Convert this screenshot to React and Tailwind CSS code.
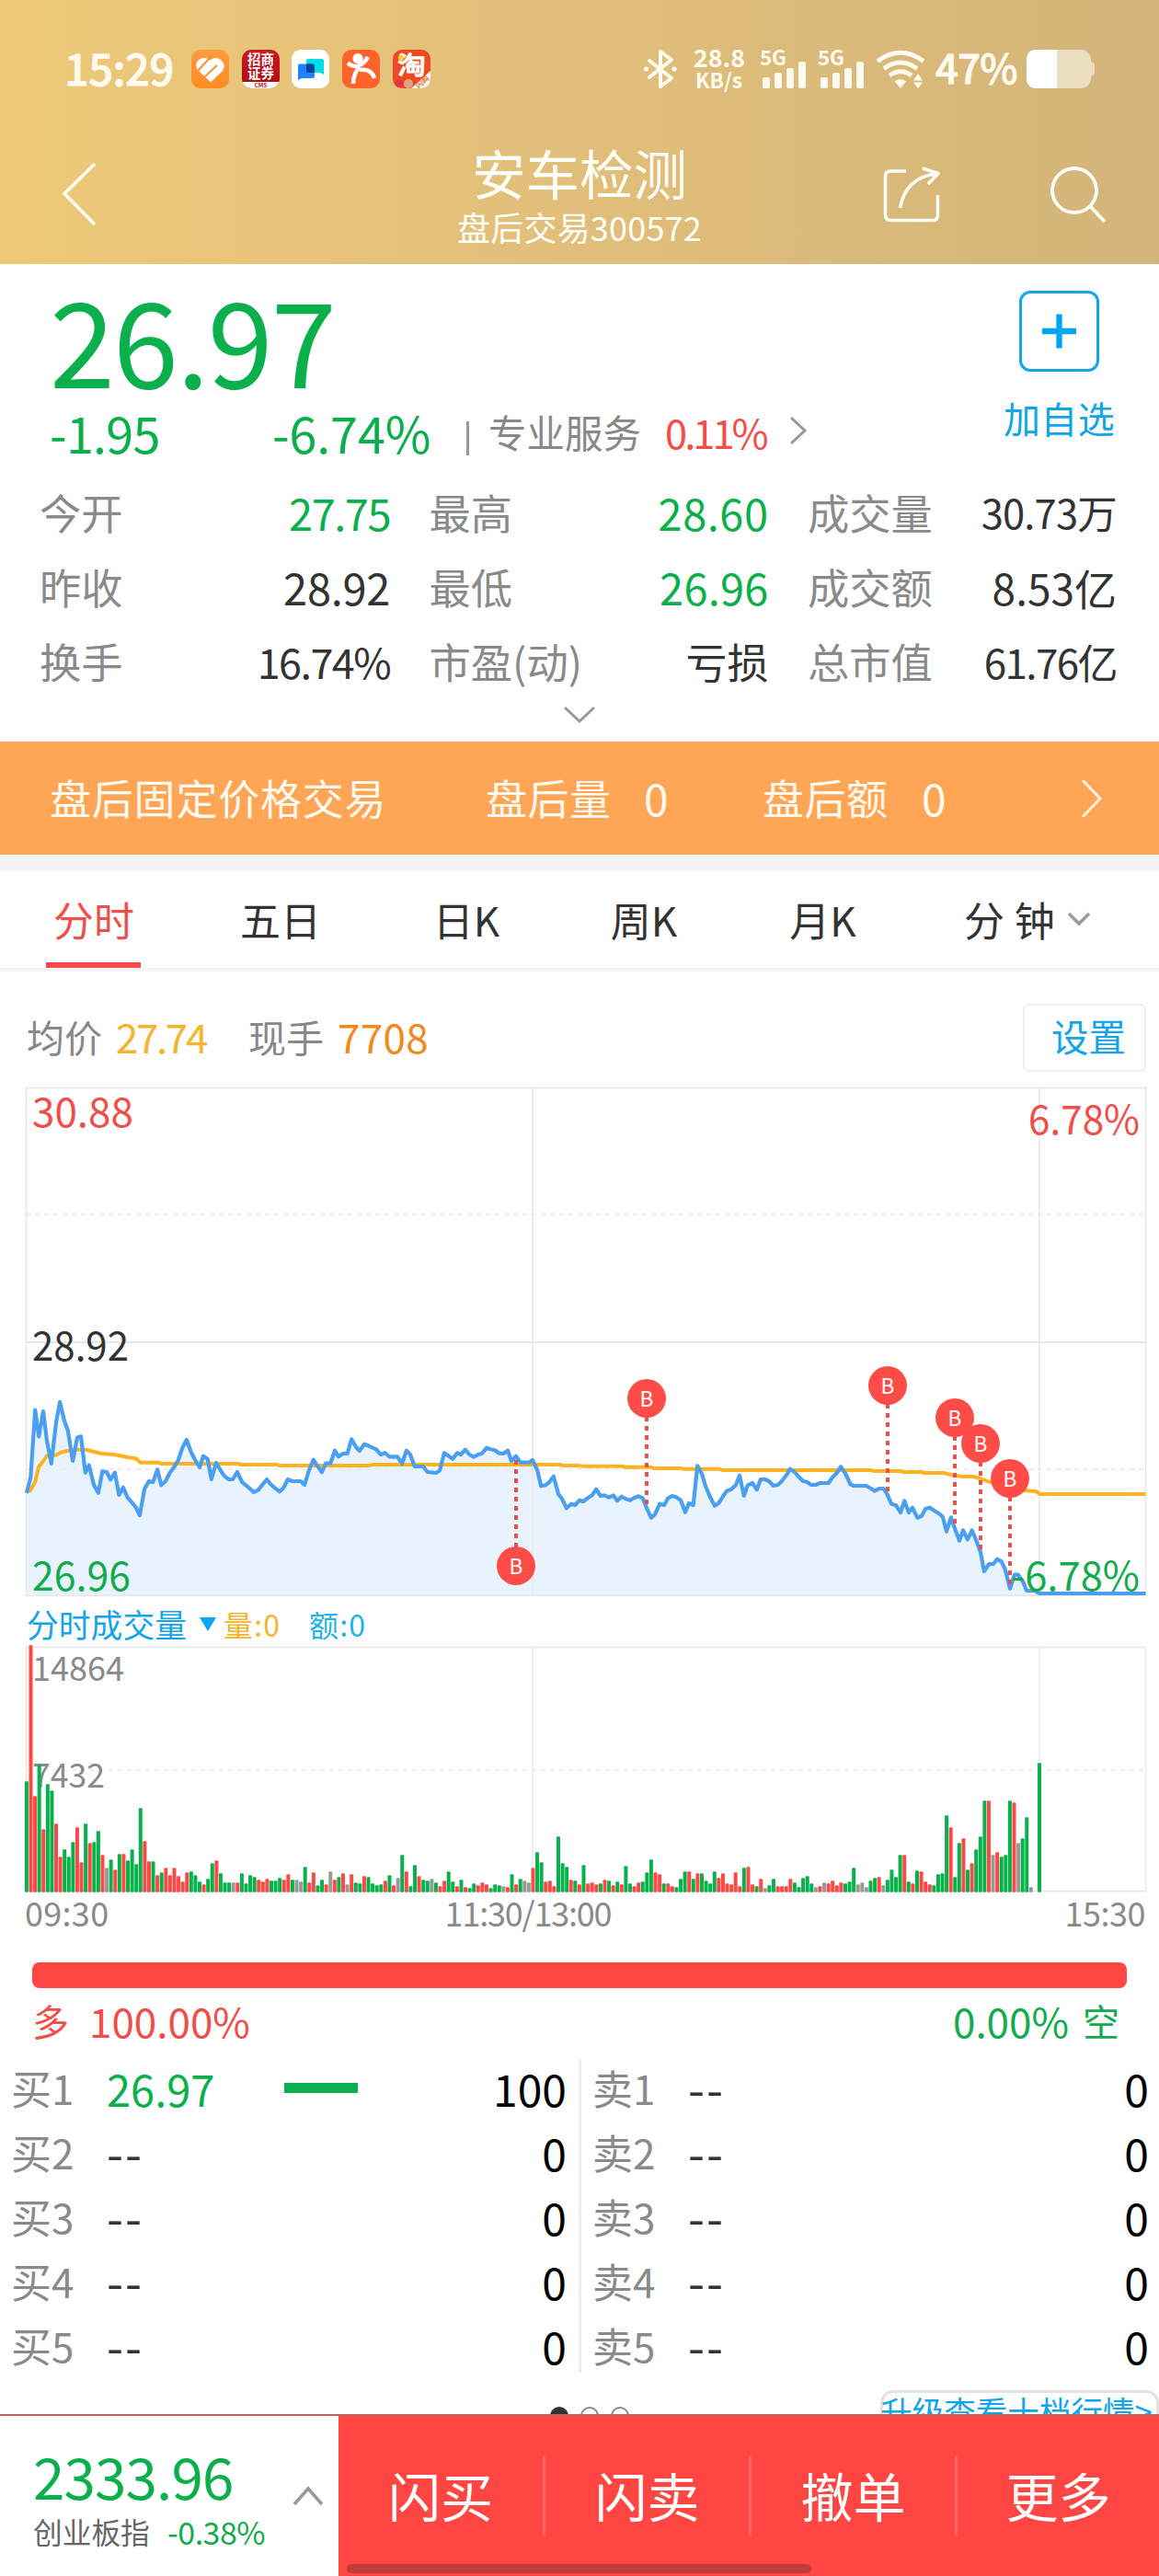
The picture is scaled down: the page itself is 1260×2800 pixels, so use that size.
import React from "react";

const MORNING =
  "72,668 83,618 95,398 105,484 117,402 127,498 139,572 152,436 162,372 174,433 184,466 197,564 209,488 219,484 231,602 241,578 254,642 266,668 277,598 289,600 299,625 311,602 322,675 333,650 345,683 356,698 368,716 378,741 391,655 403,630 414,633 426,592 436,643 448,630 459,604 470,586 482,562 494,520 505,495 518,538 528,560 540,585 550,548 562,558 572,624 585,570 597,595 607,613 619,624 630,624 642,600 655,633 665,643 677,655 687,666 699,658 711,640 722,624 734,642 744,652 757,664 767,652 779,624 791,630 814,630 824,642 836,594 848,560 859,580 871,601 881,572 894,572 906,530 916,550 928,540 940,540 951,493 963,518 973,531 986,509 996,514 1018,526 1030,543 1042,538 1053,550 1075,550 1088,572 1100,530 1110,543 1122,582 1145,582 1157,600 1180,603 1190,595 1202,538 1225,557 1237,538 1247,543 1259,527 1270,543 1282,551 1294,543 1304,540 1317,521 1327,526 1339,529 1351,539 1362,540 1374,530 1384,564 1396,548 1409,569 1431,569 1441,561 1454,594 1464,646 1476,643 1486,634 1498,614 1511,673 1521,688 1533,718 1546,704 1556,708 1568,692";
const AFTERNOON =
  "10,696 22,685 34,676 45,656 57,678 67,676 80,683 92,676 102,694 114,680 124,687 137,692 147,685 160,679 171,685 182,718 194,749 204,738 217,704 229,708 239,686 251,678 261,682 274,692 286,731 296,702 308,708 319,580 331,606 341,646 353,680 366,710 376,702 388,680 398,662 410,657 423,643 433,611 445,677 455,643 468,636 480,658 490,624 502,624 513,630 525,645 537,642 547,630 560,610 570,590 582,600 592,614 605,630 615,632 627,642 640,642 650,636 674,636 684,618 697,602 707,583 720,606 733,640 742,645 776,645 789,654 799,662 811,654 823,654 833,674 844,704 856,708 869,732 879,694 891,732 901,716 914,749 926,743 936,720 948,716 960,726 971,734 983,746 993,794 1005,748 1015,782 1028,824 1038,790 1050,820 1062,790 1073,822 1085,860 1095,924 1108,900 1120,900 1130,884 1142,892 1152,918 1165,980 1177,935 1187,935 1200,958 1210,987 1232,987 1244,996 1532,996";
const AVG_MORNING =
  "72,665 82,661 95,632 105,583 115,568 127,547 150,545 165,536 185,530 210,527 232,527 275,540 310,543 345,552 368,556 380,569 430,569 436,573 645,573 652,576 750,576 756,579 1000,579 1006,576 1515,576 1522,579 1565,579";
const AVG_AFTERNOON =
  "10,581 115,581 122,584 195,584 202,588 275,588 282,590 380,590 386,594 790,594 796,597 870,597 876,600 925,600 932,603 985,603 1010,610 1035,615 1065,615 1085,621 1110,633 1130,636 1164,648 1210,661 1235,663 1246,672 1532,672";

// Series samples are stored on a fine grid; this maps them to chart pixels.
const toPoints = (series, originX) =>
  series
    .split(" ")
    .map((pair) => {
      const [x, y] = pair.split(",").map(Number);
      return `${(originX + x / 2.489).toFixed(1)},${(1400 + y / 3).toFixed(1)}`;
    })
    .join(" ");

const PRICE_POINTS = `${toPoints(MORNING, 0)} ${toPoints(AFTERNOON, 630)}`;
const AVG_POINTS = `${toPoints(AVG_MORNING, 0)} ${toPoints(AVG_AFTERNOON, 630)}`;

// One entry per minute: g = down, r = up, a = flat, then the bar's top.
const VOLUME =
  "g589 r145 r637 g535 r745 g598 g619 r727 r835 g811 g835 g787 r739 r853 g727 r790 g787 g751 r829 a871 g844 r877 g826 r826 g847 g811 g859 g676 r784 r850 g850 r895 g886 r871 r895 r871 r898 r916 r886 g883 g895 g916 r925 g907 g856 r847 g889 g919 g919 a919 r919 g889 g922 g895 g901 r910 r916 r907 g913 g913 g904 r910 r892 g910 a910 a916 g868 r919 r886 g928 g910 r925 a883 r910 g901 r889 a925 r892 g919 g922 r898 g901 g922 g928 g925 r913 g895 r928 a904 g829 r883 g931 g862 r898 g910 g913 a907 g919 r931 r913 g883 g916 r931 g910 r934 g937 g922 r928 r919 r925 g937 g925 g928 a931 r934 g892 r925 g907 a913 a919 r871 g820 g853 r916 r913 r931 g769 g856 g868 r910 g913 r925 g862 r922 r919 r925 g922 r910 g913 r928 g916 r925 g865 g922 r931 r919 g916 g886 g844 r886 r892 g922 r922 r931 g934 g907 g883 r883 g907 r889 g889 g913 g922 g883 r904 r889 r922 r925 r886 r931 g871 r868 r925 g931 r907 a937 g928 g907 r931 r931 r931 r907 g919 g934 g904 g898 g922 a934 r931 a919 r922 r913 r928 r919 g922 g916 g871 a925 a919 a934 g913 g904 r901 a928 g910 g877 g901 g829 r829 g916 r922 g880 r883 r916 r925 g928 g892 g889 g700 r739 g901 g790 r775 g877 r856 g811 g769 g652 r652 a829 r820 g835 g829 g652 r658 a790 g775 g706 a934 a950 g529";
const VOLUME_COLORS = { g: "#08b14b", r: "#fb4a45", a: "#999999" };
const BARS = VOLUME.split(" ").map((entry, i) => ({
  x: 28.9 + i * 4.588,
  top: 1740 + Number(entry.slice(1)) / 3,
  color: VOLUME_COLORS[entry[0]],
}));

const MARKERS = [
  { x: 561, y: 1702, end: 1583 },
  { x: 703, y: 1520, end: 1640 },
  { x: 965, y: 1506, end: 1624 },
  { x: 1038, y: 1541, end: 1660 },
  { x: 1066, y: 1569, end: 1688 },
  { x: 1098, y: 1607, end: 1724 },
];

function Label({ x, y, w, size = 44, fill, children }) {
  return (
    <text x={x} y={y} textLength={w} lengthAdjust="spacingAndGlyphs" fontSize={size} fill={fill}>
      {children}
    </text>
  );
}

function AppIcon({ className, children }) {
  return (
    <div className={`h-[42px] w-[41px] overflow-hidden rounded-[10px] ${className}`}>
      <svg viewBox="0 0 41 42" className="block h-full w-full">{children}</svg>
    </div>
  );
}

function Signal() {
  return (
    <div className="w-[50px]">
      <svg viewBox="0 0 50 42" className="block h-[42px] w-[50px] overflow-visible" fill="#fffaf0">
        <text x="-1" y="16.5" fontSize="22" fontWeight="700" textLength="29" lengthAdjust="spacingAndGlyphs">5G</text>
        <rect x="2" y="30" width="8" height="12" rx="2.5" />
        <rect x="15" y="25" width="8" height="17" rx="2.5" />
        <rect x="28" y="20" width="8" height="22" rx="2.5" />
        <rect x="41" y="13" width="8" height="29" rx="2.5" />
      </svg>
    </div>
  );
}

function StatusBar() {
  return (
    <div className="flex h-[96px] items-end text-[#fffaf0]">
      <div className="ml-[70px] flex h-[42px] w-[138px] items-center pb-[6px] text-[47px] leading-none font-medium tracking-[-0.5px] [-webkit-text-stroke:0.8px_#fffaf0]">15:29</div>
      <div className="flex gap-[13.7px]">
        <AppIcon className="bg-linear-to-b from-[#ff9c40] to-[#ff8a22]">
          <path d="M20.500 11.500Q26 7 32 11Q38 16 34 23L21 35.500L7 22Q3 15 8 11Q14 7 20.500 11.500z" fill="#fff" />
          <g fill="none" stroke="#ff9330" strokeWidth="2.200">
            <path d="M7.500 22.500L20.500 8.500" />
            <path d="M14 30L28 17" />
          </g>
          <path d="M8.500 22.500L12 26.500L16 31.500L10 31z" fill="#fff" opacity="0" />
        </AppIcon>
        <AppIcon className="bg-linear-to-b from-[#c91a22] to-[#a90c12]">
          <rect y="35" width="41" height="7" fill="#fff" />
          <g fill="#fff" fontSize="14.5" fontWeight="700">
            <text x="6" y="16">招商</text>
            <text x="6" y="31">证券</text>
          </g>
          <text x="13.500" y="40.800" fontSize="6.5" fontWeight="700" fill="#b81018">CMS</text>
        </AppIcon>
        <AppIcon className="bg-white">
          <path d="M18 10h15q2 0 2 2v15l-4-2H18q-2 0-2-2V12q0-2 2-2z" fill="#00dfe3" />
          <path d="M9 15.500h14q2 0 2 2V29q0 2-2 2H11l-4 2V17.500q0-2 2-2z" fill="#1f83fb" />
          <path d="M16 15.500h7q2 0 2 2V25h-7q-2 0-2-2z" fill="#00429c" />
        </AppIcon>
        <AppIcon className="bg-[#ff622b]">
          <circle cx="17" cy="9.500" r="5.500" fill="#fff" />
          <g fill="none" stroke="#fff" strokeWidth="4.500">
            <path d="M6 14.500Q18 24 28 8" />
            <path d="M19 19Q12 26 12 37" />
            <path d="M19 22Q32 20 35 31" />
          </g>
        </AppIcon>
        <AppIcon className="bg-[#ee4a22]">
          <text x="5" y="27" fontSize="27" fontWeight="500" fill="#fff" stroke="#fff" strokeWidth="0.8" textLength="31" lengthAdjust="spacingAndGlyphs">淘</text>
          <circle cx="9" cy="9" r="3.200" fill="#ffd21f" />
          <path d="M20 42L41 23V42z" fill="#fff" />
          <circle cx="7" cy="37" r="4.500" fill="#e9304a" />
          <circle cx="17" cy="37" r="5" fill="#d9a880" />
          <text x="24.500" y="39" fontSize="8" fontWeight="700" fill="#ee6a22" transform="rotate(-40 31 36)">闪购</text>
        </AppIcon>
      </div>
      <svg viewBox="0 0 36 42" className="ml-[232px] block h-[42px] w-[36px]" fill="none" stroke="#fffaf0" strokeWidth="4" strokeLinejoin="round" strokeLinecap="round">
        <path d="M6 12L30 31L18 40V2L30 11L6 30" />
        <path d="M2.500 21h.1M33 21h.1" strokeWidth="5" />
      </svg>
      <svg viewBox="0 0 54 44" className="ml-[19px] block h-[44px] w-[54px] overflow-visible -mb-[2px]" fill="#fffaf0" fontWeight="700">
        <text x="-1" y="19" fontSize="25.500" textLength="56" lengthAdjust="spacingAndGlyphs">28.8</text>
        <text x="1" y="41.500" fontSize="22" textLength="51" lengthAdjust="spacingAndGlyphs">KB/s</text>
      </svg>
      <div className="ml-[18px] flex gap-[13px]">
        <Signal />
        <Signal />
      </div>
      <svg viewBox="0 0 52 42" className="ml-[13px] block h-[42px] w-[52px]" fill="none" stroke="#fffaf0" strokeWidth="5">
        <path d="M1 12.500Q26 -6 51 12.500" />
        <path d="M8 20.500Q26 7.500 44 20.500" />
        <path d="M14 28Q26 19.500 38 28" />
        <path d="M19.500 34.500Q26 30 32 34.500L26 42z" fill="#fffaf0" stroke="none" />
        <path d="M40 33.500L45 26L50 33.500zM40 35.500L45 42L50 35.500z" fill="#fffaf0" stroke="none" />
      </svg>
      <div className="ml-[12px] flex h-[42px] w-[99px] items-center pb-[6px] text-[44px] leading-none font-medium tracking-[-0.800px] [-webkit-text-stroke:0.8px_#fffaf0]">47%</div>
      <svg viewBox="0 0 74 42" className="block h-[42px] w-[74px]">
        <rect width="70" height="42" rx="11" fill="#ecdfc0" />
        <path d="M70 13q4 1 4 4v8q0 3-4 4z" fill="#ecdfc0" />
        <path d="M11 0H33V42H11Q0 42 0 31V11Q0 0 11 0z" fill="#fff" />
      </svg>
    </div>
  );
}

function NavBar() {
  return (
    <div className="flex h-[191px] items-start text-[#fffef8]">
      <svg viewBox="0 0 40 72" className="mt-[78px] ml-[66px] block h-[72px] w-[40px]" fill="none" stroke="#fffdf5" strokeWidth="3.500">
        <path d="M37 4L4 36.500L37 70" />
      </svg>
      <div className="ml-[374px] flex w-[300px] flex-col items-center pt-[62px]">
        <div className="text-[58.500px] leading-none whitespace-nowrap">安车检测</div>
        <div className="mt-[11px] text-[36px] leading-none tracking-[0.2px] whitespace-nowrap">盘后交易300572</div>
      </div>
      <svg viewBox="0 0 64 64" className="mt-[83px] ml-[179px] block h-[64px] w-[64px]" fill="none" stroke="#fffdf5" strokeWidth="3.500">
        <path d="M26 7H9Q3.500 7 3.500 13V54.500Q3.500 60.500 9 60.500H55Q60.500 60.500 60.500 54.500V33" />
        <path d="M19.500 47Q26 13 60 10M44 4L61 9.500L50 21" strokeLinejoin="round" />
      </svg>
      <svg viewBox="0 0 64 64" className="mt-[84px] ml-[118px] block h-[64px] w-[64px]" fill="none" stroke="#fffdf5" strokeWidth="3.800">
        <circle cx="27" cy="27" r="24" />
        <path d="M43 43L60 61" />
      </svg>
    </div>
  );
}

const STATS = [
  [
    ["今开", "27.75", "text-[#0bb04c] text-[47px] tracking-[-1.5px]"],
    ["最高", "28.60", "text-[#0bb04c] text-[47px] tracking-[0.5px]"],
    ["成交量", "30.73万", "text-[#333] text-[43.500px] tracking-[-0.8px]"],
  ],
  [
    ["昨收", "28.92", "text-[#333] text-[47px] tracking-[-0.3px]"],
    ["最低", "26.96", "text-[#0bb04c] text-[47px] tracking-[0.2px]"],
    ["成交额", "8.53亿", "text-[#333] text-[46px]"],
  ],
  [
    ["换手", "16.74%", "text-[#333] text-[45px] tracking-[-1.6px]"],
    ["市盈(动)", "亏损", "text-[#333] text-[45px]"],
    ["总市值", "61.76亿", "text-[#333] text-[44px] tracking-[-1.6px]"],
  ],
];

function Quote() {
  return (
    <section className="flex h-[519px] flex-col">
      <div className="flex h-[211px] justify-between pr-[48px] pl-[54px]">
        <div>
          <div className="mt-[16px] text-[128px] leading-none tracking-[-2px] text-[#0bb04c]">26.97</div>
          <div className="mt-[9px] flex h-[60px] items-center leading-none whitespace-nowrap">
            <span className="w-[242px] text-[54px] tracking-[-0.8px] text-[#0bb04c]">-1.95</span>
            <span className="w-[211px] text-[54px] tracking-[-0.2px] text-[#0bb04c]">-6.74%</span>
            <span className="mt-[13px] h-[37px] w-[3px] bg-[#999]" />
            <span className="ml-[21px] text-[41.500px] text-[#888]">专业服务</span>
            <span className="ml-[26px] w-[135px] text-[43.500px] tracking-[-3px] text-[#f04e49]">0.11%</span>
            <svg viewBox="0 0 20 32" className="block -mt-[5px] h-[32px] w-[20px]" fill="none" stroke="#999" strokeWidth="3">
              <path d="M2 2L17 16L2 30" />
            </svg>
          </div>
        </div>
        <div className="flex w-[121px] flex-col items-center pt-[29px] text-[#12a5e8]">
          <div className="flex h-[88px] w-[87px] items-center justify-center rounded-[12px] border-[3.500px] border-[#12a5e8]">
            <svg viewBox="0 0 38 38" className="h-[38px] w-[37px]" stroke="#00a6f7" strokeWidth="6.500">
              <path d="M19 0V38M0 19H38" />
            </svg>
          </div>
          <div className="mt-[30px] text-[40px] leading-none tracking-[0.3px] whitespace-nowrap">加自选</div>
        </div>
      </div>
      <div className="mt-[18px] flex flex-col">
        {STATS.map((row, i) => (
          <div key={i} className="grid h-[81px] grid-cols-[381px_369px_336px] gap-x-[42.500px] pl-[43px] leading-none whitespace-nowrap">
            {row.map(([label, value, cls]) => (
              <div key={label} className="flex items-center justify-between">
                <span className="text-[45.300px] text-[#8a8a8a]">{label}</span>
                <span className={cls}>{value}</span>
              </div>
            ))}
          </div>
        ))}
      </div>
      <svg viewBox="0 0 36 20" className="mt-[8px] ml-[612px] block h-[20px] w-[36px]" fill="none" stroke="#999" strokeWidth="3">
        <path d="M2 2L18 17L34 2" />
      </svg>
    </section>
  );
}

function AfterHours() {
  return (
    <div className="flex h-[123px] items-center bg-[#ffa556] pb-[3px] pl-[54px] leading-none whitespace-nowrap text-[#fffaf0]">
      <span className="w-[474px] text-[45px] tracking-[0.8px]">盘后固定价格交易</span>
      <span className="w-[172px] text-[45px] tracking-[0.500px]">盘后量</span>
      <span className="w-[129px] text-[48px]">0</span>
      <span className="w-[173px] text-[45px] tracking-[0.500px]">盘后额</span>
      <span className="w-[173px] text-[48px]">0</span>
      <svg viewBox="0 0 24 44" className="mt-[3px] block h-[44px] w-[24px]" fill="none" stroke="#fff3e2" strokeWidth="3">
        <path d="M2 2L21 22L2 42" />
      </svg>
    </div>
  );
}

function Tabs() {
  return (
    <div className="grid h-[109px] grid-cols-[204px_202px_202px_184px_205px_263px] border-b-4 border-[#f4f4f4] text-[44px] leading-none whitespace-nowrap text-[#333]">
      <div className="relative flex items-center justify-center pb-[2px] text-[#ef4f4b]">
        分时
        <span className="absolute bottom-0 left-[50px] h-[6px] w-[103px] bg-[#f54b4b]" />
      </div>
      {["五日", "日K", "周K", "月K"].map((tab) => (
        <div key={tab} className="flex items-center justify-center pb-[2px]">{tab}</div>
      ))}
      <div className="flex items-center pb-[2px] pl-[51px]">
        <span className="w-[112px] tracking-[0.500px]">分 钟</span>
        <svg viewBox="0 0 26 18" className="block h-[18px] w-[26px]" fill="none" stroke="#999" strokeWidth="3.500">
          <path d="M2 3L13 14L24 3" />
        </svg>
      </div>
    </div>
  );
}

function ChartInfo() {
  return (
    <div className="flex h-[126px] items-center pt-[17px] pr-[14px] pl-[29px] leading-none whitespace-nowrap">
      <span className="-mt-[3px] w-[97px] text-[41px] text-[#888]">均价</span>
      <span className="-mt-[3px] w-[144px] text-[44px] tracking-[-2.400px] text-[#f4b52c]">27.74</span>
      <span className="-mt-[3px] w-[97px] text-[41px] text-[#888]">现手</span>
      <span className="-mt-[3px] text-[44px] tracking-[0.300px] text-[#ee8b1c]">7708</span>
      <div className="ml-auto flex h-[74px] w-[134px] items-center justify-center rounded-[6px] border-2 border-[#eee] pb-[3px] pl-[9px] text-[40.500px] text-[#12a5e8]">设置</div>
    </div>
  );
}

function PriceChart() {
  return (
    <svg viewBox="0 1180 1260 556" className="-mt-[2px] block h-[556px] w-[1260px]">
      <polygon points={`28.900,1734 ${PRICE_POINTS} 1246,1734`} fill="#e8f3fe" />
      <g stroke="#e7e7e7" strokeWidth="1.500" fill="none">
        <path d="M28 1182.500H1247M28 1734.300H1247" />
        <path d="M28.500 1182V1735M579 1182V1735M1130 1182V1735M1245.500 1182V1735" />
        <path d="M28 1459H1245" strokeWidth="2" />
        <path d="M28 1320H1245M28 1597H1245" strokeDasharray="5 5" stroke="#e9e9e9" />
      </g>
      <polyline points={AVG_POINTS} fill="none" stroke="#fdb321" strokeWidth="4" strokeLinejoin="round" />
      <polyline points={PRICE_POINTS} fill="none" stroke="#4b9ff0" strokeWidth="4.200" strokeLinejoin="round" />
      {MARKERS.map((m) => (
        <g key={m.x}>
          <path d={`M${m.x} ${m.y}V${m.end}`} stroke="#e8504e" strokeWidth="4" strokeDasharray="5 5" />
          <circle cx={m.x} cy={m.y} r="21" fill="#ff4c47" />
          <text x={m.x} y={m.y + 8.500} fontSize="22.500" fill="#fff" textAnchor="middle">B</text>
        </g>
      ))}
      <Label x={35} y={1225} w={110} fill="#ef4f4b">30.88</Label>
      <Label x={35} y={1479} w={105} fill="#333">28.92</Label>
      <Label x={35} y={1728.500} w={107} fill="#12ac4e">26.96</Label>
      <Label x={1118} y={1233} w={121} fill="#ef4f4b">6.78%</Label>
      <Label x={1099} y={1728.500} w={140} fill="#12ac4e">-6.78%</Label>
    </svg>
  );
}

function VolumeChart() {
  return (
    <>
      <div className="flex h-[50px] items-center pt-[8px] pl-[29px] leading-none whitespace-nowrap">
        <span className="text-[34.800px] text-[#12a5e8]">分时成交量</span>
        <svg viewBox="0 0 18 15" className="ml-[14px] block h-[15px] w-[18px]" fill="#0aa6f5">
          <path d="M0 0H18L9 15z" />
        </svg>
        <span className="ml-[8px] w-[93px] text-[32px] tracking-[1.200px] text-[#f4b52c]">量:0</span>
        <span className="text-[32px] tracking-[1.200px] text-[#1fb4e6]">额:0</span>
      </div>
      <svg viewBox="0 1786 1260 274" className="block h-[274px] w-[1260px]">
        <g stroke="#e6e6e6" strokeWidth="1.500" fill="none">
          <path d="M28 1790.500H1247M28 2055.500H1247M28.500 1790V2056" />
          <path d="M579 1790V2056M1130 1790V2056M1245.500 1790V2056" strokeWidth="2" stroke="#efefef" />
          <path d="M28 1924H1245" strokeDasharray="5 5" strokeWidth="2" stroke="#efefef" />
        </g>
        <Label x={35} y={1826.500} w={100} size={36.500} fill="#8a8a8a">14864</Label>
        <Label x={35} y={1942.500} w={79} size={36.500} fill="#8a8a8a">7432</Label>
        {BARS.map((b, i) => (
          <rect key={i} x={b.x - 2} y={b.top} width="4" height={2056.700 - b.top} rx="1" fill={b.color} />
        ))}
      </svg>
      <div className="grid h-[33px] grid-cols-[300px_494px_1fr] items-center pr-[15px] pb-[2px] pl-[27px] text-[36px] leading-none text-[#8a8a8a]">
        <span className="tracking-[0.300px]">09:30</span>
        <span className="text-center tracking-[-1.200px]">11:30/13:00</span>
        <span className="text-right tracking-[-0.500px]">15:30</span>
      </div>
    </>
  );
}

function Depth({ side, rows, className }) {
  return (
    <div className={className}>
      {rows.map(([price, amount], i) => (
        <div key={i} className="flex h-[70px] items-center pb-[2px] leading-none whitespace-nowrap">
          <span className="w-[104px] text-[44px] text-[#8a8a8a]">{side}{i + 1}</span>
          {price ? (
            <>
              <span className="w-[193px] text-[47px]  text-[#0bb04c]">{price}</span>
              <span className="h-[11px] w-[80px] bg-[#08b14b]" />
            </>
          ) : (
            <span className="text-[52px] tracking-[2px] text-[#333]">--</span>
          )}
          <span className="ml-auto text-[48px] text-black">{amount}</span>
        </div>
      ))}
    </div>
  );
}

function OrderBook() {
  const empty = [null, "0"];
  return (
    <>
      <div className="mt-[40px] ml-[35px] h-[28px] w-[1190px] rounded-[8px] bg-[#ff4642]" />
      <div className="flex h-[70px] items-center pr-[43px] pb-[1px] pl-[35px] leading-none whitespace-nowrap">
        <span className="w-[62px] text-[40px] text-[#ef4f4b]">多</span>
        <span className="text-[44px] text-[#ef4f4b]">100.00%</span>
        <span className="ml-auto text-[44px] text-[#12ac4e]">0.00%</span>
        <span className="ml-[15px] text-[40px] text-[#12ac4e]">空</span>
      </div>
      <div className="mt-[4px] flex h-[350px]">
        <Depth side="买" rows={[["26.97", "100"], empty, empty, empty, empty]} className="w-[629px] pr-[13px] pl-[12px]" />
        <div className="mt-[4px] mb-[6px] w-[3px] bg-[#eee]" />
        <Depth side="卖" rows={[empty, empty, empty, empty, empty]} className="w-[628px] pr-[11px] pl-[12px]" />
      </div>
      <div className="flex h-[39px] items-start justify-end overflow-hidden">
        <div className="mt-[31px] mr-[273px] flex gap-[13px]">
          <span className="h-[20px] w-[20px] rounded-full bg-[#333]" />
          <span className="h-[20px] w-[20px] rounded-full border-2 border-[#888]" />
          <span className="h-[20px] w-[20px] rounded-full border-2 border-[#888]" />
        </div>
        <div className="mt-[13px] h-[60px] w-[303px] shrink-0 rounded-[14px] border-[3.500px] border-[#e3e3e3] pt-[2px] text-[34.600px] leading-none whitespace-nowrap text-[#12a5e8]">
          <span className="-ml-[3px] inline-block">升级查看十档行情&gt;</span>
        </div>
      </div>
    </>
  );
}

function BottomBar() {
  return (
    <div className="relative flex h-[176px] border-t-2 border-[#c4615f]">
      <div className="flex w-[368px] items-center bg-white pl-[36px]">
        <div className="w-[282px] whitespace-nowrap">
          <div className="mt-[2px] text-[62px] leading-none tracking-[-0.900px] text-[#0bb04c]">2333.96</div>
          <div className="mt-[14px] flex items-center leading-none">
            <span className="w-[146px] text-[31.700px] text-[#666]">创业板指</span>
            <span className="text-[34px] tracking-[-0.500px] text-[#12ac4e]">-0.38%</span>
          </div>
        </div>
        <svg viewBox="0 0 34 22" className="block h-[22px] w-[34px]" fill="none" stroke="#999" strokeWidth="3.500">
          <path d="M2 20L17 3L32 20" />
        </svg>
      </div>
      <div className="grid flex-1 grid-cols-[225px_224px_224px_219px] items-center bg-[#ff4642] text-center text-[57px] leading-none whitespace-nowrap text-white">
        {["闪买", "闪卖", "撤单", "更多"].map((action, i) => (
          <div key={action} className={`flex h-[88px] items-center justify-center pb-[4px] ${i < 3 ? "border-r-3 border-[#ff6763]" : ""}`}>{action}</div>
        ))}
      </div>
      <div className="absolute bottom-[3px] left-[377px] h-[10px] w-[505px] rounded-full bg-[#c23d3a]" />
    </div>
  );
}

export default function App() {
  return (
    <div className="h-[2800px] w-[1260px] overflow-hidden bg-[#fefefe] font-['Noto_Sans_CJK_SC',sans-serif]">
      <header className="h-[287px] bg-linear-to-r from-[#edc978] via-[#e1bf7a] to-[#d3b57a]">
        <StatusBar />
        <NavBar />
      </header>
      <Quote />
      <AfterHours />
      <div className="h-[18px] bg-[#f4f4f4]" />
      <Tabs />
      <ChartInfo />
      <PriceChart />
      <VolumeChart />
      <OrderBook />
      <BottomBar />
    </div>
  );
}
